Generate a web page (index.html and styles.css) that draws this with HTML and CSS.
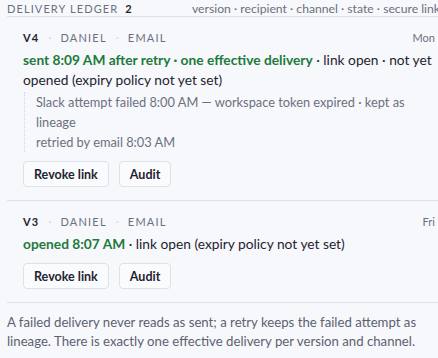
FILE: index.html
```html
<!DOCTYPE html>
<html lang="en">
<head>
  <meta charset="UTF-8">
  <meta name="viewport" content="width=device-width, initial-scale=1.0">
  <title>Delivery ledger</title>
  <link rel="stylesheet" href="styles.css">
</head>
<body>
  <div class="ledger">
    <div class="ledger-head">
      <div class="ledger-title">DELIVERY LEDGER <b>2</b></div>
      <div class="ledger-cols">version · recipient · channel · state · secure link</div>
    </div>

    <!-- V4 -->
    <div class="entry">
      <div class="entry-meta">
        <span class="ver">V4</span><span class="dot">·</span><span>DANIEL</span><span class="dot">·</span><span>EMAIL</span>
        <span class="when">Mon</span>
      </div>
      <p class="state"><span class="ok">sent 8:09 AM after retry · one effective delivery</span> · link open · not yet opened (expiry policy not yet set)</p>
      <div class="lineage">
        <p>Slack attempt failed 8:00 AM — workspace token expired · kept as lineage</p>
        <p>retried by email 8:03 AM</p>
      </div>
      <div class="actions">
        <button class="btn">Revoke link</button>
        <button class="btn">Audit</button>
      </div>
    </div>

    <!-- V3 -->
    <div class="entry">
      <div class="entry-meta">
        <span class="ver">V3</span><span class="dot">·</span><span>DANIEL</span><span class="dot">·</span><span>EMAIL</span>
        <span class="when">Fri</span>
      </div>
      <p class="state"><span class="ok">opened 8:07 AM</span> · link open (expiry policy not yet set)</p>
      <div class="actions">
        <button class="btn">Revoke link</button>
        <button class="btn">Audit</button>
      </div>
    </div>

    <p class="note">A failed delivery never reads as sent; a retry keeps the failed attempt as lineage. There is exactly one effective delivery per version and channel.</p>
  </div>
</body>
</html>
```

FILE: styles.css
```css
body {
  margin: 0;
  background: #f7f8fb;
  font-family: Lato, "Noto Sans", sans-serif;
  color: #1f2330;
}
.ledger {
  padding: 0 0 0 7px;
}
.ledger-head {
  display: flex;
  justify-content: space-between;
  align-items: center;
  height: 16px;
  margin-top: -5px;
  padding-top: 5px;
  border-bottom: 1px solid #dfe1e8;
  font-size: 11px;
  color: #6b7080;
  white-space: nowrap;
  overflow: hidden;
}
.ledger-title {
  letter-spacing: 1.1px;
}
.ledger-title b {
  color: #1f2330;
  margin-left: 3px;
}
.ledger-cols {
  font-size: 12.2px;
  margin-right: -2px;
}
.entry {
  padding: 14px 3px 13px 16px;
  border-bottom: 1px solid #dfe1e8;
}
.entry-meta {
  display: flex;
  align-items: center;
  font-size: 11px;
  letter-spacing: 1.2px;
  color: #6b7080;
}
.entry-meta .ver {
  color: #1f2330;
  font-weight: 700;
}
.entry-meta .dot {
  color: #d3d6dd;
  margin: 0 8px 0 9px;
}
.entry-meta .when {
  margin-left: auto;
  letter-spacing: 0;
}
.state {
  margin: 6px -4px 0 0;
  font-size: 13.75px;
  line-height: 20px;
}
.ok {
  color: #1d7a3b;
  font-weight: 700;
}
.lineage {
  margin: 2px 0 0 1px;
  padding-left: 11px;
  border-left: 1px dotted #cfd2da;
  font-size: 12.8px;
  line-height: 20px;
  color: #6b7080;
}
.lineage p {
  margin: 0;
}
.actions {
  display: flex;
  gap: 10px;
  margin-top: 9px;
}
.btn {
  height: 26px;
  padding: 0 10px;
  font-family: inherit;
  font-size: 12.5px;
  font-weight: 700;
  color: #1f2330;
  background: #fafbfd;
  border: 1px solid #dfe1e8;
  border-radius: 4px;
}
.note {
  margin: 10px 0 0;
  padding-right: 12px;
  font-size: 13.2px;
  line-height: 19px;
  color: #5c6170;
}
```
